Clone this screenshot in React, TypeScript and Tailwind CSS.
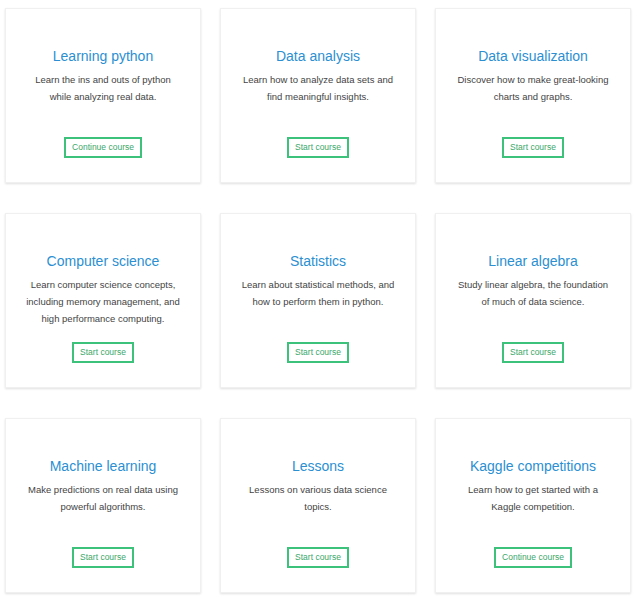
import React from "react";

const courses = [
  { title: "Learning python", desc: "Learn the ins and outs of python while analyzing real data.", btn: "Continue course" },
  { title: "Data analysis", desc: "Learn how to analyze data sets and find meaningful insights.", btn: "Start course" },
  { title: "Data visualization", desc: "Discover how to make great-looking charts and graphs.", btn: "Start course" },
  { title: "Computer science", desc: "Learn computer science concepts, including memory management, and high performance computing.", btn: "Start course" },
  { title: "Statistics", desc: "Learn about statistical methods, and how to perform them in python.", btn: "Start course" },
  { title: "Linear algebra", desc: "Study linear algebra, the foundation of much of data science.", btn: "Start course" },
  { title: "Machine learning", desc: "Make predictions on real data using powerful algorithms.", btn: "Start course" },
  { title: "Lessons", desc: "Lessons on various data science topics.", btn: "Start course" },
  { title: "Kaggle competitions", desc: "Learn how to get started with a Kaggle competition.", btn: "Continue course" },
];

export default function App() {
  return (
    <div className="w-[640px] h-[598px] bg-white pt-[8px] pl-[5px]" style={{ fontFamily: '"Liberation Sans", Arial, sans-serif' }}>
      <div className="grid grid-cols-[196px_196px_196px] gap-x-[19px] gap-y-[30px]">
        {courses.map((c) => (
          <div
            key={c.title}
            className="h-[175px] bg-white border border-[#f0f0f0] shadow-[0_1px_2px_rgba(0,0,0,0.12)] flex flex-col items-center pt-[37px] px-[20px]"
          >
            <h3 className="text-[14px] leading-[20px] text-[#2b8fd2] text-center whitespace-nowrap">{c.title}</h3>
            <p className="mt-[5px] h-[66px] text-[9.5px] leading-[17px] text-[#444] text-center">{c.desc}</p>
            <button className="h-[21px] px-[6px] border-2 border-[#3cc27a] text-[8.5px] text-[#3aa86a] leading-none">
              {c.btn}
            </button>
          </div>
        ))}
      </div>
    </div>
  );
}
